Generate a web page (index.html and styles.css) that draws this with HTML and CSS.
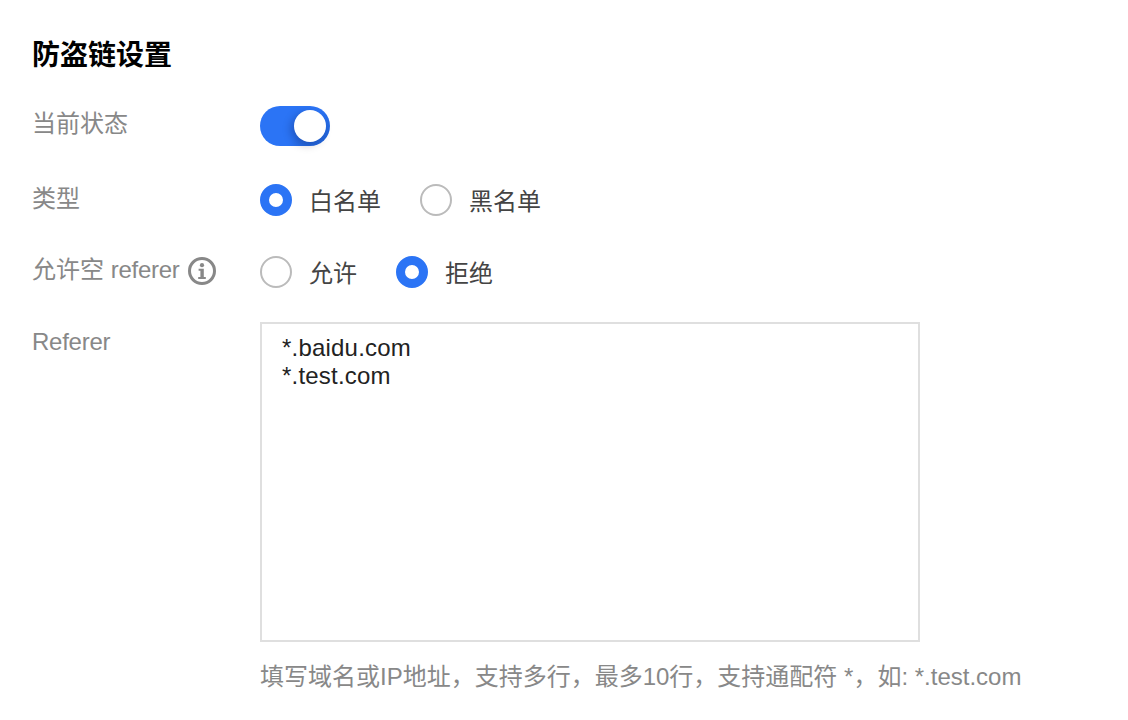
FILE: index.html
```html
<!DOCTYPE html>
<html lang="zh">
<head>
<meta charset="utf-8">
<title>防盗链设置</title>
<link rel="stylesheet" href="styles.css">
</head>
<body>
<main class="panel">
  <h1 class="title">防盗链设置</h1>
  <div class="row row-status">
    <div class="label">当前状态</div>
    <div class="control"><span class="switch"><span class="knob"></span></span></div>
  </div>
  <div class="row row-type">
    <div class="label">类型</div>
    <div class="control radios">
      <label class="radio"><span class="dot on"></span><span class="radio-text">白名单</span></label>
      <label class="radio"><span class="dot"></span><span class="radio-text">黑名单</span></label>
    </div>
  </div>
  <div class="row row-empty">
    <div class="label label-icon"><span>允许空 <span class="latin">referer</span></span>
      <svg class="info" width="28" height="28" viewBox="0 0 28 28" aria-hidden="true">
        <circle cx="14" cy="14" r="12.5" fill="none" stroke="#888" stroke-width="3"/>
        <circle cx="14" cy="8.2" r="2.1" fill="#888"/>
        <path d="M10.6 11.8h5.2v8.2h2v2h-7.6v-2h2.2v-6.2h-1.8z" fill="#888"/>
      </svg>
    </div>
    <div class="control radios">
      <label class="radio"><span class="dot"></span><span class="radio-text">允许</span></label>
      <label class="radio"><span class="dot on"></span><span class="radio-text">拒绝</span></label>
    </div>
  </div>
  <div class="row row-referer">
    <div class="label latin">Referer</div>
    <div class="control stack">
      <div class="textarea">*.baidu.com<br>*.test.com</div>
      <p class="hint">填写域名或IP地址，支持多行，最多10行，支持通配符 *，如: *.test.com</p>
    </div>
  </div>
</main>
</body>
</html>
```
FILE: styles.css
```css
* { box-sizing: border-box; }
html, body { margin: 0; background: #fff; }
body {
  width: 1128px;
  height: 720px;
  overflow: hidden;
  font-family: "Liberation Sans", "Noto Sans CJK SC", sans-serif;
  color: #444;
}
.panel { padding: 40px 0 0 32px; }
.title {
  margin: 0;
  font-size: 28px;
  line-height: 32px;
  font-weight: 700;
  color: #000;
}
.row { display: flex; align-items: flex-start; }
.row-status { margin-top: 34px; height: 40px; }
.row-type { margin-top: 38px; height: 34px; }
.row-empty { margin-top: 38px; height: 34px; }
.row-referer { margin-top: 32px; }
.label {
  width: 228px;
  flex: none;
  font-size: 24px;
  line-height: 36px;
  color: #888;
}
.latin { letter-spacing: -.25px; }
.label-icon { display: flex; align-items: center; gap: 8px; }
.row-type .label { margin-top: -3px; }
.row-empty .label { margin-top: -4px; }
.row-referer .label { margin-top: 2px; }
.info { margin-top: 2px; flex: none; }
.switch {
  display: block;
  position: relative;
  width: 70px;
  height: 40px;
  border-radius: 20px;
  background: linear-gradient(135deg, #2b74f5 60%, #1f5fd0 100%);
}
.knob {
  position: absolute;
  top: 4px;
  right: 4px;
  width: 32px;
  height: 32px;
  border-radius: 50%;
  background: #fff;
  box-shadow: -3px 3px 8px rgba(0, 0, 40, .25);
}
.radios { display: flex; align-items: center; gap: 39px; height: 32px; }
.radio { display: flex; align-items: center; gap: 17px; font-size: 24px; line-height: 32px; color: #444; }
.radio-text { padding-top: 4px; }
.dot {
  display: block;
  flex: none;
  width: 32px;
  height: 32px;
  border-radius: 50%;
  border: 2px solid #bbb;
  background: #fff;
}
.dot.on { border: 9px solid #2b74f5; }
.stack { display: flex; flex-direction: column; }
.textarea {
  width: 660px;
  height: 320px;
  border: 2px solid #dfdfdf;
  padding: 10px 20px;
  font-size: 24px;
  line-height: 28px;
  letter-spacing: .2px;
  color: #222;
}
.hint {
  margin: 17px 0 0;
  font-size: 24px;
  line-height: 36px;
  color: #888;
  white-space: nowrap;
}
```
